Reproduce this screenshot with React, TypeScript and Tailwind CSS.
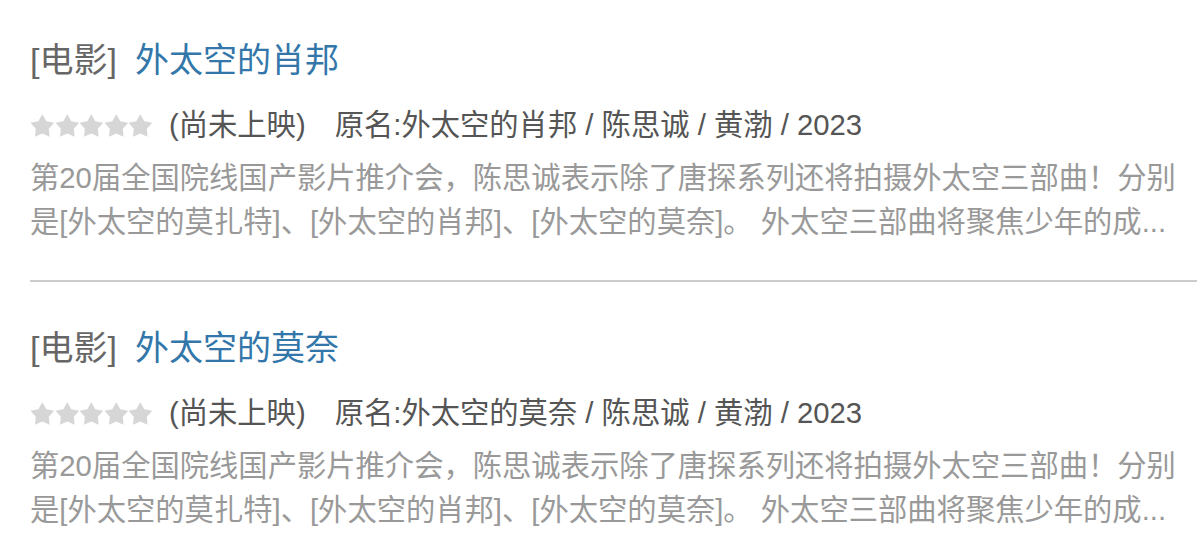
const items = [
  {
    id: 1,
    title: "外太空的肖邦",
    meta: "原名:外太空的肖邦 / 陈思诚 / 黄渤 / 2023",
  },
  {
    id: 2,
    title: "外太空的莫奈",
    meta: "原名:外太空的莫奈 / 陈思诚 / 黄渤 / 2023",
  },
]

const abstract =
  "第20届全国院线国产影片推介会，陈思诚表示除了唐探系列还将拍摄外太空三部曲！分别是[外太空的莫扎特]、[外太空的肖邦]、[外太空的莫奈]。 外太空三部曲将聚焦少年的成..."

function Stars() {
  return (
    <span className="flex shrink-0">
      {[0, 1, 2, 3, 4].map((i) => (
        <svg key={i} viewBox="1.4 1.4 21.2 20.3" className="h-[23px] w-[24.6px] shrink-0 fill-[#d6d6d6]">
          <path d="M12 1.6L15.53 7.75L22.46 9.2L17.71 14.45L18.47 21.5L12 18.6L5.53 21.5L6.29 14.45L1.54 9.2L8.47 7.75Z" />
        </svg>
      ))}
    </span>
  )
}

export default function App() {
  return (
    <div
      className="min-h-screen bg-white pl-[30px]"
      style={{ fontFamily: '"Liberation Sans", "Noto Sans CJK SC", sans-serif' }}
    >
      {items.map((item) => (
        <div key={item.id} className="border-b-2 border-[#cccccc] pt-[42px] pb-[36px] first:pt-[36px]">
          <h3 className="flex text-[34px] leading-[48px]">
            <span className="text-[#666666]">[电影]</span>
            <a href="#" className="ml-[18px] text-[#3377aa]">
              {item.title}
            </a>
          </h3>
          <div className="mt-[19px] flex items-center text-[29.3px] leading-[44px] text-[#555555]">
            <Stars />
            <span className="ml-[16px]">(尚未上映)</span>
            <span className="ml-[29px]">{item.meta}</span>
          </div>
          <p className="mt-[9px] line-clamp-2 text-[29.3px] leading-[44px] text-[#999999]">
            {abstract}
          </p>
        </div>
      ))}
    </div>
  )
}
